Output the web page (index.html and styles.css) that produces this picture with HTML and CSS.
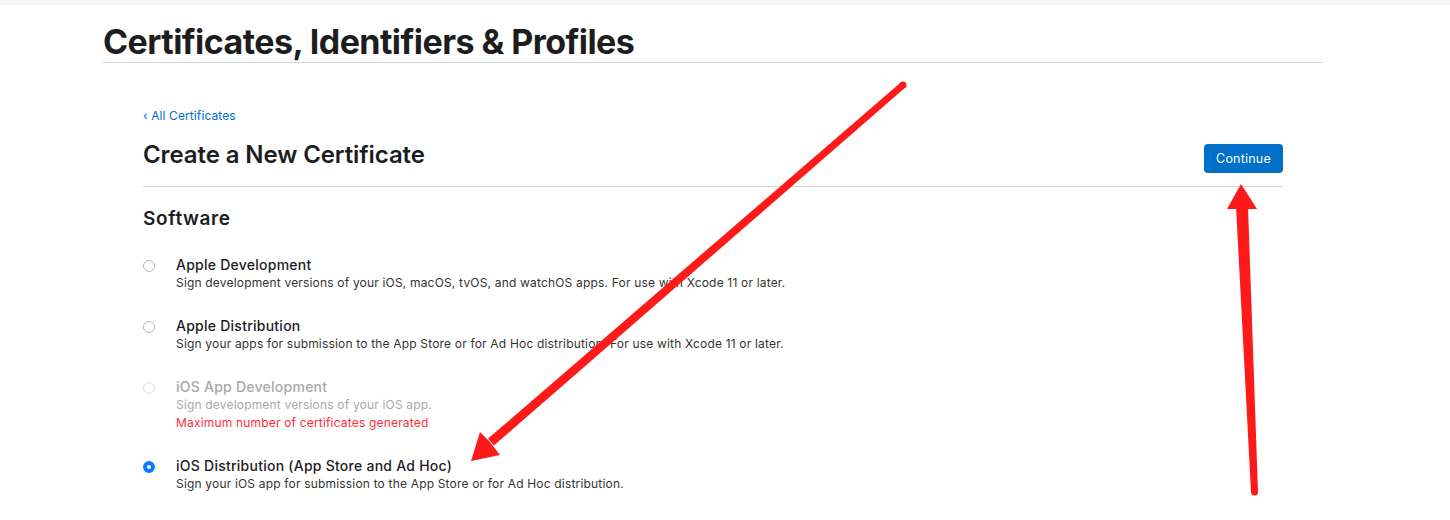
FILE: index.html
```html
<!DOCTYPE html>
<html lang="en">
<head>
    <meta charset="UTF-8">
    <title>Certificates, Identifiers &amp; Profiles</title>
    <link rel="stylesheet" href="styles.css">
</head>
<body>
    <div class="topbar"></div>

    <div class="page">
        <h1 class="page-title">Certificates, Identifiers &amp; Profiles</h1>

        <div class="content">
            <a class="back-link" href="#">&lsaquo; All Certificates</a>

            <div class="head-row">
                <h2>Create a New Certificate</h2>
                <button class="btn-continue">Continue</button>
            </div>

            <h3>Software</h3>

            <!-- certificate types -->
            <label class="option">
                <span class="radio"></span>
                <span class="option-text">
                    <span class="option-title">Apple Development</span>
                    <span class="option-desc">Sign development versions of your iOS, macOS, tvOS, and watchOS apps. For use with Xcode 11 or later.</span>
                </span>
            </label>

            <label class="option">
                <span class="radio"></span>
                <span class="option-text">
                    <span class="option-title">Apple Distribution</span>
                    <span class="option-desc">Sign your apps for submission to the App Store or for Ad Hoc distribution. For use with Xcode 11 or later.</span>
                </span>
            </label>

            <label class="option disabled">
                <span class="radio"></span>
                <span class="option-text">
                    <span class="option-title">iOS App Development</span>
                    <span class="option-desc">Sign development versions of your iOS app.</span>
                    <span class="option-error">Maximum number of certificates generated</span>
                </span>
            </label>

            <label class="option selected">
                <span class="radio"></span>
                <span class="option-text">
                    <span class="option-title">iOS Distribution (App Store and Ad Hoc)</span>
                    <span class="option-desc">Sign your iOS app for submission to the App Store or for Ad Hoc distribution.</span>
                </span>
            </label>
        </div>
    </div>

    <!-- annotation arrows drawn over the page -->
    <svg class="annotations" width="1450" height="520" viewBox="0 0 1450 520">
        <polygon points="900.7,82.4 905.3,87.6 493.9,445.4 488.1,438.6" fill="#ff1a1a"/>
        <circle cx="903" cy="85" r="3.5" fill="#ff1a1a"/>
        <polygon points="471,461 480,432 490,442 500,455" fill="#ff1a1a"/>
        <polygon points="1236,206 1248,206 1258,492 1251,492" fill="#ff1a1a"/>
        <circle cx="1254.5" cy="492" r="3.5" fill="#ff1a1a"/>
        <polygon points="1241,184 1257,209 1227,209" fill="#ff1a1a"/>
    </svg>
</body>
</html>
```

FILE: styles.css
```css
/* Basic Reset */
body, h1, h2, h3, p, button {
    margin: 0;
    padding: 0;
    box-sizing: border-box;
}

body {
    font-family: Inter, "Liberation Sans", Arial, sans-serif;
    background-color: #fff;
    color: #1d1d1f;
    overflow: hidden;
}

.topbar {
    height: 5px;
    background-color: #f5f5f7;
}

/* Page container */
.page {
    width: 1220px;
    margin-left: 103px;
}

.page-title {
    font-size: 34px;
    font-weight: 700;
    letter-spacing: -0.55px;
    line-height: 40px;
    padding-top: 17px;
    border-bottom: 1px solid #d6d6d6;
}

.content {
    padding: 0 40px;
}

.back-link {
    display: inline-block;
    margin-top: 45px;
    font-size: 12px;
    line-height: 16px;
    letter-spacing: 0.1px;
    color: #0070c9;
    text-decoration: none;
}

.head-row {
    display: flex;
    justify-content: space-between;
    align-items: flex-start;
    margin-top: 16px;
    padding-bottom: 13px;
    border-bottom: 1px solid #d6d6d6;
}

.head-row h2 {
    font-size: 24px;
    font-weight: 600;
    letter-spacing: -0.1px;
    line-height: 30px;
}

.btn-continue {
    background-color: #0070c9;
    color: #fff;
    font-family: inherit;
    font-size: 12.5px;
    letter-spacing: 0.2px;
    border: none;
    border-radius: 4px;
    width: 79px;
    height: 29px;
    margin-top: 4px;
    cursor: pointer;
}

h3 {
    font-size: 19px;
    font-weight: 600;
    letter-spacing: 0.6px;
    line-height: 24px;
    margin-top: 20px;
    margin-bottom: 25px;
}

/* Radio options */
.option {
    display: flex;
    align-items: flex-start;
    gap: 21px;
    margin-bottom: 25px;
}

.radio {
    width: 10px;
    height: 10px;
    margin-top: 4px;
    border: 1px solid #b5b5b5;
    border-radius: 50%;
    flex-shrink: 0;
    box-sizing: content-box;
}

.option-text {
    display: flex;
    flex-direction: column;
}

.option-title {
    font-size: 14px;
    font-weight: 500;
    line-height: 18px;
    letter-spacing: 0.25px;
    color: #1d1d1f;
}

.option-desc,
.option-error {
    font-size: 12px;
    line-height: 18px;
    letter-spacing: 0.18px;
    color: #333;
}

.option-error {
    color: #ff2d3a;
}

.option.disabled .radio {
    border-color: #ddd;
}

.option.disabled .option-title,
.option.disabled .option-desc {
    color: #a8a8a8;
}

.option.selected .radio {
    width: 4px;
    height: 4px;
    border: 4px solid #0a7cff;
}

.annotations {
    position: absolute;
    top: 0;
    left: 0;
    pointer-events: none;
}
```
